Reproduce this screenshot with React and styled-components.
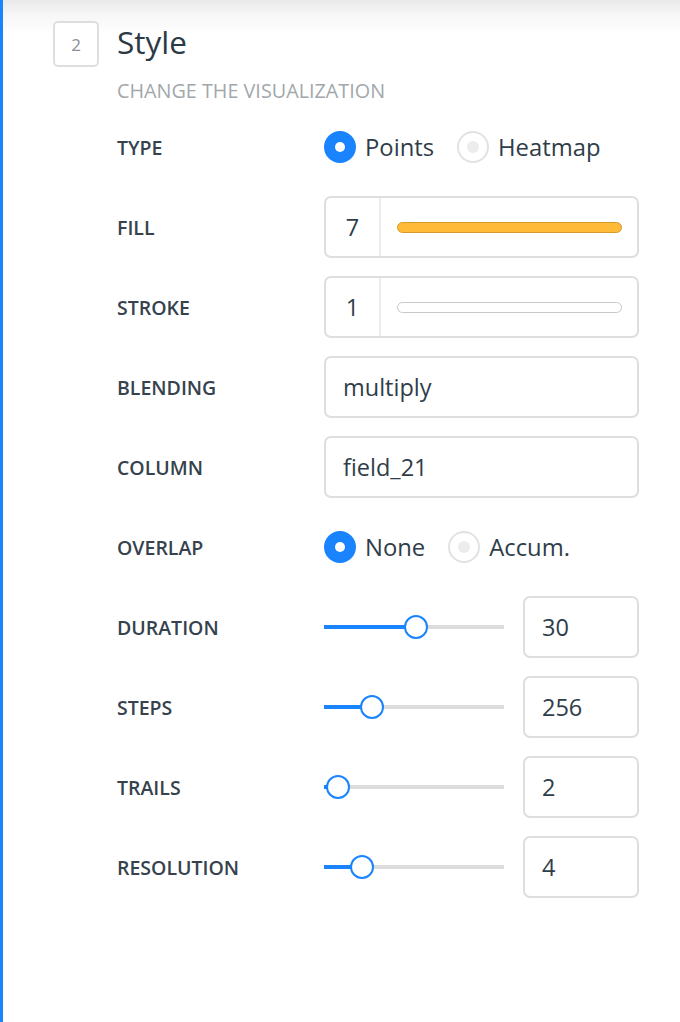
import styled, { createGlobalStyle } from 'styled-components'

const GlobalStyle = createGlobalStyle`
  html, body {
    margin: 0;
    padding: 0;
    background: #fff;
  }
  body {
    font-family: 'Open Sans', 'Noto Sans', sans-serif;
    color: #2f3d49;
  }
`

const Panel = styled.div`
  box-sizing: border-box;
  width: 680px;
  height: 1022px;
  border-left: 3px solid #1a84ff;
  background: linear-gradient(#e9e9e9 0px, #f6f6f6 14px, #fff 34px);
  padding: 21px 41px 0 50px;
`

const Header = styled.div`
  display: flex;
  align-items: center;
  gap: 18px;
`

const StepBox = styled.div`
  box-sizing: border-box;
  width: 46px;
  height: 46px;
  border: 2px solid #dedede;
  border-radius: 5px;
  background: #fff;
  display: flex;
  align-items: center;
  justify-content: center;
  font-size: 17px;
  color: #8a9096;
`

const Title = styled.h2`
  margin: -4px 0 0;
  font-size: 31.5px;
  font-weight: 400;
  line-height: 46px;
  color: #2c3a46;
`

const Subtitle = styled.div`
  margin: 12px 0 0 64px;
  font-size: 19.8px;
  line-height: 24px;
  color: #a2a7ab;
  text-transform: uppercase;
`

const Rows = styled.div`
  margin: 13px 0 0 64px;
  display: flex;
  flex-direction: column;
  gap: 18px;
`

const Row = styled.div`
  display: grid;
  grid-template-columns: 207px 315px;
  align-items: center;
  height: 62px;
`

const Label = styled.div`
  font-size: 19.5px;
  font-weight: 600;
  text-transform: uppercase;
  color: #36424d;
`

const RadioGroup = styled.div`
  display: flex;
  align-items: center;
  gap: 23px;
`

const RadioOption = styled.div`
  display: flex;
  align-items: center;
  gap: 9px;
  font-size: 23.8px;
  color: #2f3d49;
`

const RadioDot = styled.span`
  box-sizing: border-box;
  width: 32px;
  height: 32px;
  border-radius: 50%;
  display: flex;
  align-items: center;
  justify-content: center;
  background: ${p => (p.$on ? '#1a84ff' : '#fff')};
  border: 2px solid ${p => (p.$on ? '#1a84ff' : '#e2e2e2')};

  &::after {
    content: '';
    width: ${p => (p.$on ? 10 : 12)}px;
    height: ${p => (p.$on ? 10 : 12)}px;
    border-radius: 50%;
    background: ${p => (p.$on ? '#fff' : '#ececec')};
  }
`

const Field = styled.div`
  box-sizing: border-box;
  height: 62px;
  border: 2px solid #dedede;
  border-radius: 7px;
  background: #fff;
  display: flex;
  align-items: center;
  padding: 0 17px;
  font-size: 23.5px;
  color: #2f3d49;
`

const SwatchField = styled(Field)`
  padding: 0;
`

const SwatchValue = styled.div`
  width: 55px;
  height: 100%;
  box-sizing: border-box;
  border-right: 2px solid #ececec;
  display: flex;
  align-items: center;
  justify-content: center;
`

const SwatchBar = styled.div`
  flex: 1;
  margin: 0 15px 0 16px;
  height: 11px;
  box-sizing: border-box;
  border-radius: 6px;
  background: ${p => p.$fill};
  border: 1px solid ${p => p.$edge};
`

const SliderRow = styled.div`
  display: flex;
  align-items: center;
  gap: 19px;
`

const Track = styled.div`
  position: relative;
  width: 180px;
  height: 4px;
  background: #dcdcdc;
`

const TrackFill = styled.div`
  position: absolute;
  left: 0;
  top: 0;
  height: 4px;
  background: #1a84ff;
`

const Thumb = styled.div`
  position: absolute;
  top: -10px;
  box-sizing: border-box;
  width: 24px;
  height: 24px;
  margin-left: -12px;
  border-radius: 50%;
  border: 2px solid #1a84ff;
  background: #fff;
`

const NumberField = styled(Field)`
  width: 116px;
`

const Radio = ({ options, selected }) => (
  <RadioGroup>
    {options.map(o => (
      <RadioOption key={o}>
        <RadioDot $on={o === selected} />
        {o}
      </RadioOption>
    ))}
  </RadioGroup>
)

const Swatch = ({ value, fill, edge }) => (
  <SwatchField>
    <SwatchValue>{value}</SwatchValue>
    <SwatchBar $fill={fill} $edge={edge} />
  </SwatchField>
)

const Slider = ({ value, pos }) => (
  <SliderRow>
    <Track>
      <TrackFill style={{ width: pos }} />
      <Thumb style={{ left: pos }} />
    </Track>
    <NumberField>{value}</NumberField>
  </SliderRow>
)

const sliders = [
  { label: 'Duration', value: '30', pos: 92 },
  { label: 'Steps', value: '256', pos: 48 },
  { label: 'Trails', value: '2', pos: 14 },
  { label: 'Resolution', value: '4', pos: 38 },
]

export default function App() {
  return (
    <>
      <GlobalStyle />
      <Panel>
        <Header>
          <StepBox>2</StepBox>
          <Title>Style</Title>
        </Header>
        <Subtitle>Change the visualization</Subtitle>
        <Rows>
          <Row>
            <Label>Type</Label>
            <Radio options={['Points', 'Heatmap']} selected="Points" />
          </Row>
          <Row>
            <Label>Fill</Label>
            <Swatch value="7" fill="#ffbb38" edge="#d49a2a" />
          </Row>
          <Row>
            <Label>Stroke</Label>
            <Swatch value="1" fill="#fff" edge="#c8c8c8" />
          </Row>
          <Row>
            <Label>Blending</Label>
            <Field>multiply</Field>
          </Row>
          <Row>
            <Label>Column</Label>
            <Field>field_21</Field>
          </Row>
          <Row>
            <Label>Overlap</Label>
            <Radio options={['None', 'Accum.']} selected="None" />
          </Row>
          {sliders.map(s => (
            <Row key={s.label}>
              <Label>{s.label}</Label>
              <Slider value={s.value} pos={s.pos} />
            </Row>
          ))}
        </Rows>
      </Panel>
    </>
  )
}
